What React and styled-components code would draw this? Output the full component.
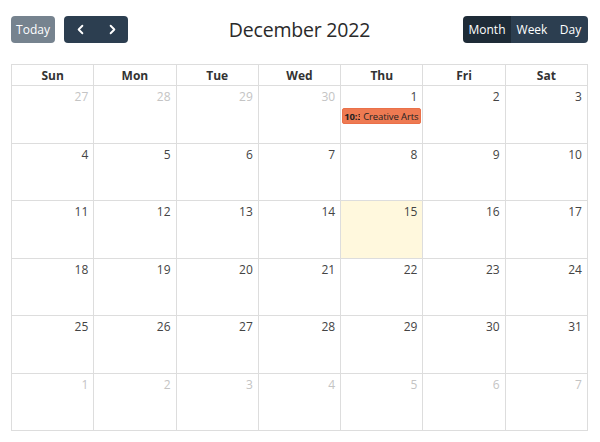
import React from "react";
import styled, { createGlobalStyle } from "styled-components";
import { ChevronLeft, ChevronRight } from "lucide-react";

const GlobalStyle = createGlobalStyle`
  body {
    margin: 0;
    background: #fff;
    font-family: "Open Sans", "Noto Sans", sans-serif;
    color: #333;
  }
`;

const Page = styled.div`
  padding: 16px 12px 0 11px;
`;

const Toolbar = styled.div`
  display: flex;
  align-items: center;
  justify-content: space-between;
  height: 27px;
  margin-bottom: 21px;
`;

const Left = styled.div`
  display: flex;
  gap: 9px;
  width: 160px;
`;

const Right = styled.div`
  display: flex;
  justify-content: flex-end;
  width: 160px;
`;

const Title = styled.h2`
  margin: 0;
  font-size: 19.5px;
  font-weight: 500;
  color: #2a2a2a;
  letter-spacing: -0.2px;
`;

const Group = styled.div`
  display: flex;
  border-radius: 4px;
  overflow: hidden;
`;

const Button = styled.button`
  height: 27px;
  border: none;
  padding: 0 ${(p) => p.$pad || 8}px;
  font-family: inherit;
  font-size: 12px;
  color: #fff;
  display: flex;
  align-items: center;
  justify-content: center;
  background: ${(p) => (p.$active ? "#1e2b37" : "#2c3e50")};
  width: ${(p) => (p.$w ? p.$w + "px" : "auto")};
`;

const TodayButton = styled(Button)`
  background: #76838f;
  border-radius: 4px;
  width: 44px;
`;

const Grid = styled.div`
  display: grid;
  grid-template-columns: repeat(7, 1fr);
  grid-template-rows: 21px repeat(6, 57.5px);
  border-right: 1px solid #ddd;
  border-bottom: 1px solid #ddd;
`;

const HeadCell = styled.div`
  border-left: 1px solid #ddd;
  border-top: 1px solid #ddd;
  font-weight: 700;
  font-size: 12px;
  display: flex;
  align-items: center;
  justify-content: center;
  color: #333;
`;

const DayCell = styled.div`
  border-left: 1px solid #ddd;
  border-top: 1px solid #ddd;
  background: ${(p) => (p.$today ? "#fff8dd" : "#fff")};
  display: flex;
  flex-direction: column;
  min-width: 0;
`;

const DayNum = styled.div`
  text-align: right;
  font-size: 12px;
  padding: 2px 5px 0 0;
  line-height: 17px;
  color: ${(p) => (p.$other ? "#c4c4c4" : "#444")};
`;

const Event = styled.div`
  margin: 3px 1px 0 1px;
  height: 16px;
  background: #ee7a52;
  border: 1px solid #ea7049;
  border-radius: 2px;
  display: flex;
  align-items: center;
  font-size: 9.5px;
  letter-spacing: -0.1px;
  color: #222;
  overflow: hidden;
  white-space: nowrap;
  padding-left: 1px;
  box-sizing: border-box;
`;

const EventTime = styled.span`
  font-weight: 700;
  display: inline-block;
  width: 16px;
  overflow: hidden;
  margin-right: 3px;
  flex-shrink: 0;
`;

const EventTitle = styled.span`
  overflow: hidden;
`;

const days = ["Sun", "Mon", "Tue", "Wed", "Thu", "Fri", "Sat"];

const cells = [];
for (let d = 27; d <= 30; d++) cells.push({ n: d, other: true });
for (let d = 1; d <= 31; d++) cells.push({ n: d });
for (let d = 1; d <= 7; d++) cells.push({ n: d, other: true });

export default function App() {
  return (
    <Page>
      <GlobalStyle />
      <Toolbar>
        <Left>
          <TodayButton>Today</TodayButton>
          <Group>
            <Button $w={32}>
              <ChevronLeft size={15} strokeWidth={3} />
            </Button>
            <Button $w={32}>
              <ChevronRight size={15} strokeWidth={3} />
            </Button>
          </Group>
        </Left>
        <Title>December 2022</Title>
        <Right>
          <Group>
            <Button $active $w={48}>Month</Button>
            <Button $w={42}>Week</Button>
            <Button $w={35}>Day</Button>
          </Group>
        </Right>
      </Toolbar>
      <Grid>
        {days.map((d) => (
          <HeadCell key={d}>{d}</HeadCell>
        ))}
        {cells.map((c, i) => (
          <DayCell key={i} $today={!c.other && c.n === 15}>
            <DayNum $other={c.other}>{c.n}</DayNum>
            {!c.other && c.n === 1 && (
              <Event>
                <EventTime>10:30</EventTime>
                <EventTitle>Creative Arts and Crafts</EventTitle>
              </Event>
            )}
          </DayCell>
        ))}
      </Grid>
    </Page>
  );
}
